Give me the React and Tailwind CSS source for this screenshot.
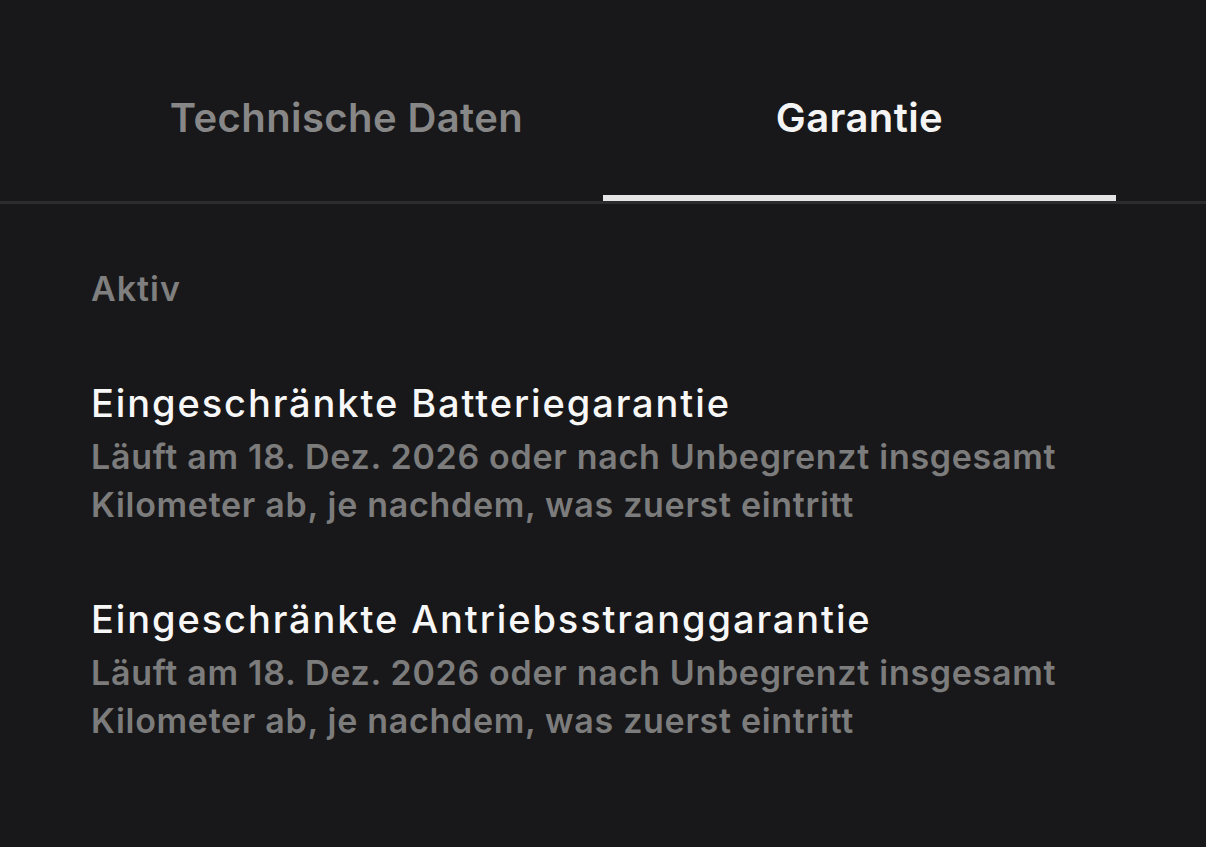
const warranties = [
    {
        title: "Eingeschränkte Batteriegarantie",
        lines: [
            "Läuft am 18. Dez. 2026 oder nach Unbegrenzt insgesamt",
            "Kilometer ab, je nachdem, was zuerst eintritt",
        ],
    },
    {
        title: "Eingeschränkte Antriebsstranggarantie",
        lines: [
            "Läuft am 18. Dez. 2026 oder nach Unbegrenzt insgesamt",
            "Kilometer ab, je nachdem, was zuerst eintritt",
        ],
    },
];

const Tab = ({ label, active }) => (
    <div
        className={`flex-1 text-center pt-[94px] pb-[53px] leading-[48px] text-[40px] font-semibold tracking-[0.4px] border-b-[6px] ${
            active ? "border-[#e4e4e4] text-[#f4f4f4]" : "border-transparent text-[#878787]"
        }`}
    >
        {label}
    </div>
);

const App = () => {
    return (
        <div
            className="min-h-[847px] bg-[#18181a] antialiased"
            style={{ fontFamily: "Inter, 'Noto Sans', sans-serif" }}
        >
            <div className="border-b-[3px] border-[#2c2c2e]">
                <div className="flex mx-[90px]">
                    <Tab label="Technische Daten" />
                    <Tab label="Garantie" active />
                </div>
            </div>

            <div className="px-[91px] pt-[65px]">
                <div className="text-[34px] leading-[40px] font-semibold tracking-[1px] text-[#7f7f7f]">Aktiv</div>
                <div className="mt-[70px] flex flex-col gap-[66px]">
                    {warranties.map((w) => (
                        <div key={w.title}>
                            <div className="text-[38px] leading-[48px] font-medium tracking-[1.9px] text-[#f7f7f7]">
                                {w.title}
                            </div>
                            <div className="mt-[6px] text-[34px] leading-[48px] font-semibold tracking-[0.7px] text-[#7c7c7c]">
                                {w.lines.map((l) => (
                                    <div key={l}>{l}</div>
                                ))}
                            </div>
                        </div>
                    ))}
                </div>
            </div>
        </div>
    );
};

export default App;
